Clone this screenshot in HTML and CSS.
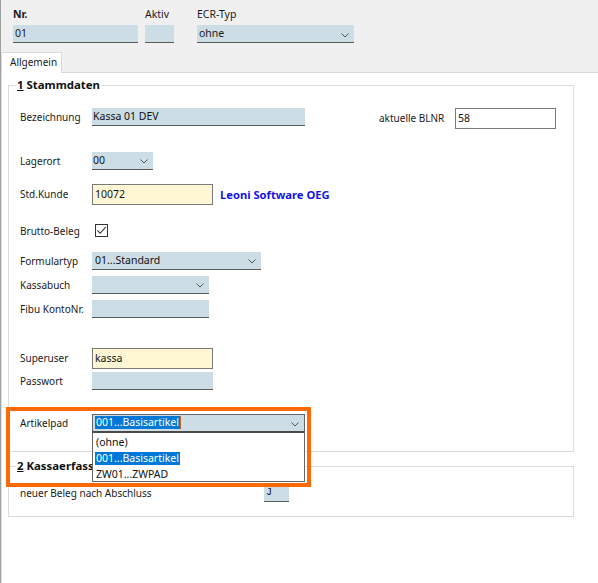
FILE: index.html
```html
<!DOCTYPE html>
<html>
<head>
<meta charset="utf-8">
<link rel="stylesheet" href="styles.css">
</head>
<body>
<div class="win">
  <div class="header">
    <div class="hf nr">
      <div class="hlabel bold">Nr.</div>
      <div class="inp">01</div>
    </div>
    <div class="hf aktiv">
      <div class="hlabel">Aktiv</div>
      <div class="inp"></div>
    </div>
    <div class="hf ecr">
      <div class="hlabel">ECR-Typ</div>
      <div class="inp sel">ohne<svg class="chev" width="8" height="5" viewBox="0 0 8 5"><path d="M0.5 0.5 L4 4 L7.5 0.5" fill="none" stroke="#555" stroke-width="1"/></svg></div>
    </div>
  </div>
  <div class="tabs"><div class="tab">Allgemein</div></div>
  <div class="panel">
    <div class="group g1">
      <div class="gtitle"><span class="ul">1</span> Stammdaten</div>

      <div class="row r1">
        <div class="lbl h18">Bezeichnung</div>
        <div class="fld w213 txt0">Kassa 01 DEV</div>
        <div class="lbl blnr h21">aktuelle BLNR</div>
        <div class="box w101 white">58</div>
      </div>

      <div class="row r2">
        <div class="lbl h18">Lagerort</div>
        <div class="fld sel w61 txt0">00<svg class="chev" width="8" height="5" viewBox="0 0 8 5"><path d="M0.5 0.5 L4 4 L7.5 0.5" fill="none" stroke="#555" stroke-width="1"/></svg></div>
      </div>

      <div class="row r3">
        <div class="lbl h21">Std.Kunde</div>
        <div class="box w121 cream">10072</div>
        <div class="link">Leoni Software OEG</div>
      </div>

      <div class="row r4">
        <div class="lbl h18">Brutto-Beleg</div>
        <div class="cb"><svg width="11" height="11" viewBox="0 0 11 11"><path d="M1.5 5.5 L4.2 8.3 L9.6 2.2" fill="none" stroke="#333" stroke-width="1.1"/></svg></div>
      </div>

      <div class="row r5">
        <div class="lbl h18">Formulartyp</div>
        <div class="fld sel w169">01...Standard<svg class="chev" width="8" height="5" viewBox="0 0 8 5"><path d="M0.5 0.5 L4 4 L7.5 0.5" fill="none" stroke="#555" stroke-width="1"/></svg></div>
      </div>

      <div class="row r6">
        <div class="lbl h18">Kassabuch</div>
        <div class="fld sel w117"><svg class="chev" width="8" height="5" viewBox="0 0 8 5"><path d="M0.5 0.5 L4 4 L7.5 0.5" fill="none" stroke="#555" stroke-width="1"/></svg></div>
      </div>

      <div class="row r7">
        <div class="lbl h18">Fibu KontoNr.</div>
        <div class="fld w117"></div>
      </div>

      <div class="row r8">
        <div class="lbl h21">Superuser</div>
        <div class="box w121 cream">kassa</div>
      </div>

      <div class="row r9">
        <div class="lbl h18">Passwort</div>
        <div class="fld w121"></div>
      </div>

      <div class="row r10">
        <div class="lbl h18">Artikelpad</div>
        <div class="combo w213">
          <span class="hl">001...Basisartikel</span><span class="caret"></span>
          <svg class="chev" width="8" height="5" viewBox="0 0 8 5"><path d="M0.5 0.5 L4 4 L7.5 0.5" fill="none" stroke="#555" stroke-width="1"/></svg>
          <div class="droplist">
            <div class="item">(ohne)</div>
            <div class="item"><span class="hl">001...Basisartikel</span></div>
            <div class="item">ZW01...ZWPAD</div>
          </div>
        </div>
      </div>
    </div>

    <div class="group g2">
      <div class="gtitle"><span class="ul">2</span> Kassaerfassung</div>
      <div class="row r11">
        <div class="lbl wide h18">neuer Beleg nach Abschluss</div>
        <div class="fld w25 jval">J</div>
      </div>
    </div>
  </div>
  <div class="mark"></div>
</div>
</body>
</html>
```

FILE: styles.css
```css
* { box-sizing: border-box; }
html, body { margin: 0; padding: 0; }
body {
  width: 598px;
  height: 583px;
  overflow: hidden;
  background: #ffffff;
  font-family: "Noto Sans", "Open Sans", sans-serif;
  font-size: 10px;
  color: #1a1a1a;
}
.win {
  position: relative;
  height: 583px;
  border-left: 1px solid #a0a0a0;
  background: #ffffff;
}
.bold { font-weight: 700; }

/* header */
.header {
  height: 52px;
  background: #f0f0f0;
  display: flex;
  padding: 7px 0 0 12px;
}
.hf { display: flex; flex-direction: column; }
.hlabel { height: 14px; line-height: 14px; margin-bottom: 4px; font-size: 10.5px; }
.nr { width: 125px; }
.aktiv { width: 29px; margin-left: 7px; }
.ecr { width: 157px; margin-left: 23px; }
.inp {
  position: relative;
  height: 18px;
  line-height: 17px;
  background: #ccdde6;
  border-bottom: 1px solid #5a5a5a;
  padding-left: 2px;
  font-size: 10.5px;
}

/* tabs */
.tabs { height: 20px; background: #f0f0f0; position: relative; }
.tab {
  position: absolute;
  left: 0;
  top: 0;
  width: 61px;
  height: 21px;
  background: #ffffff;
  border: 1px solid #d9d9d9;
  border-bottom: none;
  padding-left: 8px;
  line-height: 19px;
  z-index: 2;
}

/* panel */
.panel {
  border-top: 1px solid #d9d9d9;
  border-left: 1px solid #e0e0e0;
  height: 511px;
  padding-top: 12px;
}
.group {
  margin-left: 6px;
  width: 566px;
  border: 1px solid #dcdcdc;
  padding-left: 11px;
}
.g1 { height: 367px; }
.g2 { height: 51px; margin-top: 14px; }
.gtitle {
  display: block;
  width: max-content;
  margin-top: -8px;
  margin-left: -4px;
  height: 14px;
  line-height: 14px;
  padding: 0 1px;
  background: #ffffff;
  font-weight: 700;
  font-size: 11.4px;
  color: #111;
}
.ul { text-decoration: underline; text-underline-offset: 1px; }

.row { display: flex; align-items: flex-start; }
.r1 { margin-top: 16px; height: 21px; }
.r2 { margin-top: 23px; height: 18px; }
.r3 { margin-top: 14px; height: 21px; }
.r4 { margin-top: 17px; height: 18px; }
.r5 { margin-top: 12px; height: 18px; }
.r6 { margin-top: 6px; height: 18px; }
.r7 { margin-top: 6px; height: 18px; }
.r8 { margin-top: 30px; height: 21px; }
.r9 { margin-top: 3px; height: 18px; }
.r10 { margin-top: 24px; height: 18px; }
.r11 { margin-top: 11px; height: 18px; }

.lbl { width: 72px; flex: none; white-space: nowrap; }
.lbl.h18 { height: 18px; line-height: 18px; }
.lbl.h21 { height: 21px; line-height: 21px; }
.lbl.blnr { width: 76px; margin-left: 74px; }
.lbl.wide { width: 244px; }

.fld {
  position: relative;
  height: 18px;
  line-height: 17px;
  background: #ccdde6;
  border-bottom: 1px solid #5a5a5a;
  padding-left: 3px;
  color: #111;
  white-space: nowrap;
  font-size: 10.5px;
}
.fld.txt0 { padding-left: 1px; }
.box {
  height: 21px;
  line-height: 19px;
  border: 1px solid #7a7a7a;
  padding-left: 2px;
  color: #111;
  font-size: 10.5px;
}
.white { background: #ffffff; }
.cream { background: #fff7d4; }
.w25 { width: 25px; }
.w61 { width: 61px; }
.w101 { width: 101px; }
.w117 { width: 117px; }
.w121 { width: 121px; }
.w169 { width: 169px; }
.w213 { width: 213px; }

.chev { position: absolute; right: 5px; top: 7px; }
.inp .chev { top: 8px; }

.link {
  margin-left: 7px;
  height: 21px;
  line-height: 21px;
  color: #1414e6;
  font-weight: 700;
  font-size: 11.2px;
}

.cb {
  margin-left: 3px;
  margin-top: 2px;
  width: 13px;
  height: 13px;
  border: 1px solid #333;
  background: #fff;
  display: flex;
  align-items: center;
  justify-content: center;
}

.combo {
  position: relative;
  height: 18px;
  background: #ccdde6;
  border: 1px solid #646464;
  padding: 1px 0 0 2px;
  line-height: 14px;
  font-size: 10.5px;
}
.hl {
  background: #0078d7;
  color: #ffffff;
  padding: 0 1px;
}
.combo > .hl { display: inline-block; height: 13px; line-height: 13px; vertical-align: top; }
.caret {
  display: inline-block;
  width: 1px;
  height: 13px;
  background: #c8641e;
  vertical-align: top;
}
.droplist {
  position: absolute;
  left: -1px;
  top: 16px;
  width: 213px;
  height: 51px;
  background: #ffffff;
  border: 1px solid #646464;
  border-top: 2px solid #4a4a4a;
  padding-top: 1px;
  z-index: 3;
}
.item {
  height: 16px;
  line-height: 16px;
  padding-left: 3px;
  color: #111;
  font-size: 10.5px;
}
.item .hl { display: inline-block; height: 13px; line-height: 13px; padding: 0 1px 0 1px; margin-left: -1px; }

.jval { padding-left: 2px; font-family: "Liberation Mono", monospace; font-size: 10px; }

.mark {
  position: absolute;
  left: 5px;
  top: 407px;
  width: 305px;
  height: 80px;
  border: 4px solid #ff6a00;
  z-index: 5;
  pointer-events: none;
}
```
